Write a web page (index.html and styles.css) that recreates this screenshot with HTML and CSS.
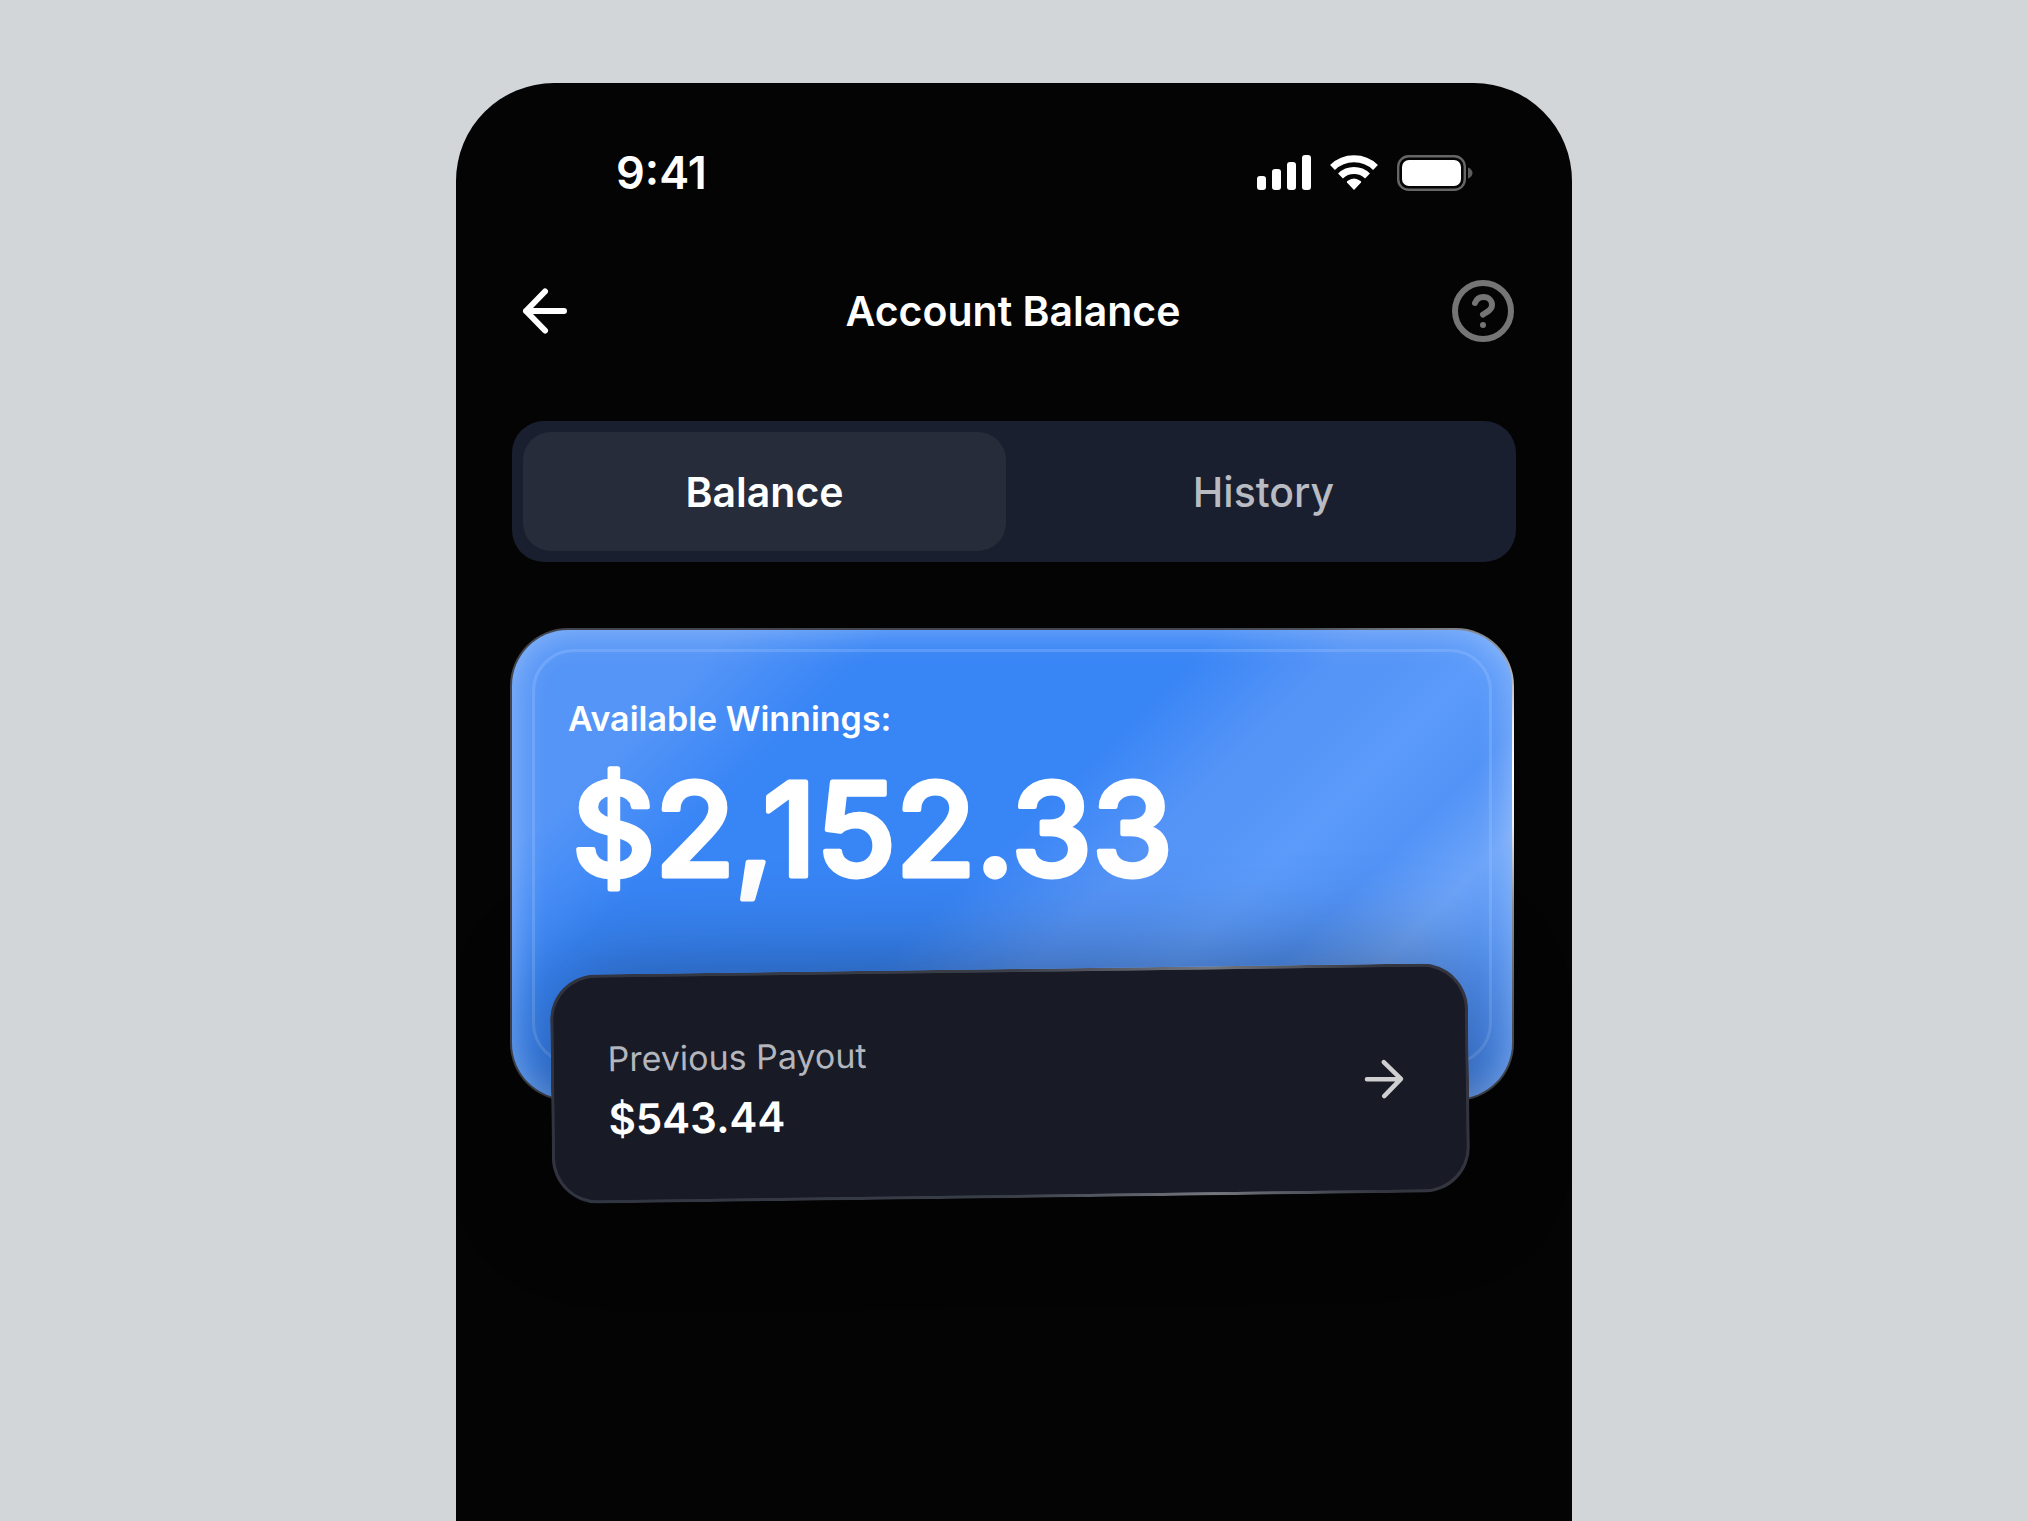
FILE: index.html
```html
<!DOCTYPE html>
<html lang="en">
<head>
<meta charset="utf-8">
<meta name="viewport" content="width=device-width, initial-scale=1">
<title>Account Balance</title>
<link rel="stylesheet" href="styles.css">
</head>

<body>

  <div class="phone">

    <div class="status">
      <span class="time">9:41</span>
      <div class="status-icons">
        <svg width="54" height="36" viewBox="0 0 54 36" fill="#fff">
          <rect x="0" y="21" width="9" height="14" rx="3"/>
          <rect x="15" y="14" width="9" height="21" rx="3"/>
          <rect x="30" y="7" width="9" height="28" rx="3"/>
          <rect x="45" y="0" width="9" height="35" rx="3"/>
        </svg>
        <svg width="48" height="36" viewBox="0 0 48 36" fill="none" stroke="#fff" stroke-width="7">
          <path d="M2.500 12.500a31 31 0 0 1 43 0"/>
          <path d="M10.500 21a19.500 19.500 0 0 1 27 0"/>
          <path d="M24 35l-7-7.500q-.5-.8.4-1.500q6.600-5 13.200 0q.9.7.4 1.500z" fill="#fff" stroke="none"/>
        </svg>
        <svg width="76" height="36" viewBox="0 0 76 36">
          <rect x="1.200" y="1.200" width="66.600" height="33.600" rx="10.500" fill="none" stroke="#666" stroke-width="2.400"/>
          <rect x="5" y="5" width="59" height="26" rx="7" fill="#fff"/>
          <path d="M71 12.500q4.500 2 4.500 5.500t-4.500 5.500z" fill="#5c5c5c"/>
        </svg>
      </div>
    </div>

    <header class="header">
      <button class="icon-button" aria-label="Back">
        <svg width="62" height="62" viewBox="0 0 62 62" fill="none" stroke="#fff" stroke-width="6" stroke-linecap="round" stroke-linejoin="round">
          <path d="M52 31H14M33 11.500L14 31l19 19.500"/>
        </svg>
      </button>
      <h1>Account Balance</h1>
      <button class="icon-button" aria-label="Help">
        <svg width="62" height="62" viewBox="0 0 62 62" fill="none" stroke="#757575" stroke-width="6" stroke-linecap="round">
          <circle cx="31" cy="31" r="28"/>
          <path d="M23 23c1.500-4 4.500-6 8.500-6c5 0 8.500 3.500 8.500 8c0 6-5.500 6.500-9 9.500"/>
          <circle cx="31" cy="45" r="3" fill="#757575" stroke="none"/>
        </svg>
      </button>
    </header>

    <nav class="tabs">
      <button class="tab active">Balance</button>
      <button class="tab">History</button>
    </nav>

    <section class="wallet">
      <div class="card">
        <div class="card-inner">
          <h2>Available Winnings:</h2>
          <svg class="amount" width="620" height="150">
            <text x="4" y="121">$2,152.33</text>
          </svg>
        </div>
      </div>
      <a class="payout" href="#payout">
        <span class="payout-text">
          <span class="payout-label">Previous Payout</span>
          <span class="payout-value">$543.44</span>
        </span>
        <svg width="40" height="40" viewBox="0 0 40 40" fill="none" stroke="#cfcfd1" stroke-width="4.500" stroke-linecap="round" stroke-linejoin="round">
          <path d="M3 20h34M20 3l17 17l-17 17"/>
        </svg>
      </a>
    </section>

  </div>

</body>
</html>
```

FILE: styles.css
```css
* {
  box-sizing: border-box;
}

body {
  margin: 0;
  min-height: 100vh;
  padding-top: 83px;
  display: flex;
  flex-direction: column;
  align-items: center;
  background: #d2d6d9;
  font-family: Inter, "Liberation Sans", sans-serif;
  color: #fff;
}

h1, h2 {
  margin: 0;
}

button {
  border: 0;
  padding: 0;
  background: none;
  color: inherit;
  font-family: inherit;
  cursor: pointer;
}

svg {
  display: block;
}

.phone {
  flex: 1;
  width: 90%;
  max-width: 1116px;
  padding: 64px 56px;
  border-radius: 98px 98px 0 0;
  background: #040404;
  overflow: hidden;
}

.status {
  display: flex;
  justify-content: space-between;
  align-items: center;
  height: 52px;
  padding: 0 43px 0 104px;
}

.time {
  font-size: 45px;
  line-height: 52px;
  font-weight: 600;
}

.status-icons {
  display: flex;
  gap: 19px;
}

.header {
  display: flex;
  justify-content: space-between;
  align-items: center;
  height: 64px;
  margin-top: 80px;
  padding-right: 2px;
}

.header h1 {
  font-size: 41px;
  font-weight: 600;
}

.tabs {
  display: grid;
  grid-template-columns: 1fr 1fr;
  gap: 16px;
  margin-top: 78px;
  padding: 11px;
  border-radius: 32px;
  background: #191f2e;
}

.tab {
  height: 119px;
  border-radius: 28px;
  font-size: 41px;
  font-weight: 500;
  color: #b9bbc2;
}

.tab.active {
  background: #272c3b;
  color: #fff;
  font-weight: 600;
}

.wallet {
  margin: 66px 2px 0 -2px;
}

.card {
  height: 473px;
  padding: 19px 20px 34px;
  border: 2px solid transparent;
  border-radius: 58px;
  background:
    linear-gradient(135deg,
      #5595f7 0%, #5595f7 15%, #3885f6 26%, #3885f6 48%,
      #5594f7 58%, #5595f7 62%, #5c9bfa 68%, #5293f7 75%,
      #6ca4f9 82%, #5091f4 90%, #3d83ee 100%) padding-box,
    radial-gradient(circle 360px at 100% 31%, #fff 0, #eceef2 14%, #8d9098 36%, #4c5058 70%, #42454d 100%) border-box;
  box-shadow: inset 0 0 36px rgba(255, 255, 255, 0.36);
}

.card-inner {
  height: 100%;
  padding: 45px 33px 0;
  border: 3px solid rgba(160, 200, 255, 0.28);
  border-radius: 42px;
}

.card h2 {
  font-size: 34px;
  line-height: 44px;
  font-weight: 600;
}

.amount {
  max-width: 100%;
  margin-top: 14px;
  overflow: visible;
  fill: #fff;
  stroke: #fff;
  stroke-width: 5px;
  stroke-linejoin: round;
  font-size: 129px;
  font-weight: 500;
}

.payout {
  position: relative;
  display: flex;
  justify-content: space-between;
  align-items: center;
  height: 229px;
  margin: -132px 45px 0 41px;
  padding: 0 62px 0 54px;
  border: 3px solid transparent;
  border-radius: 46px;
  background:
    linear-gradient(#181a25, #181a25) padding-box,
    linear-gradient(90deg, #303440 0%, #3a3e49 50%, #74777e 72%, #33363f 90%, #33343f 100%) border-box;
  box-shadow: 0 0 100px rgba(0, 0, 0, 0.4);
  color: #fff;
  text-decoration: none;
  transform: rotate(-0.75deg);
}

.payout-text {
  display: flex;
  flex-direction: column;
  gap: 12px;
}

.payout-label {
  font-size: 34px;
  line-height: 48px;
  color: #b4b6be;
}

.payout-value {
  font-size: 42px;
  line-height: 48px;
  font-weight: 600;
}
```
